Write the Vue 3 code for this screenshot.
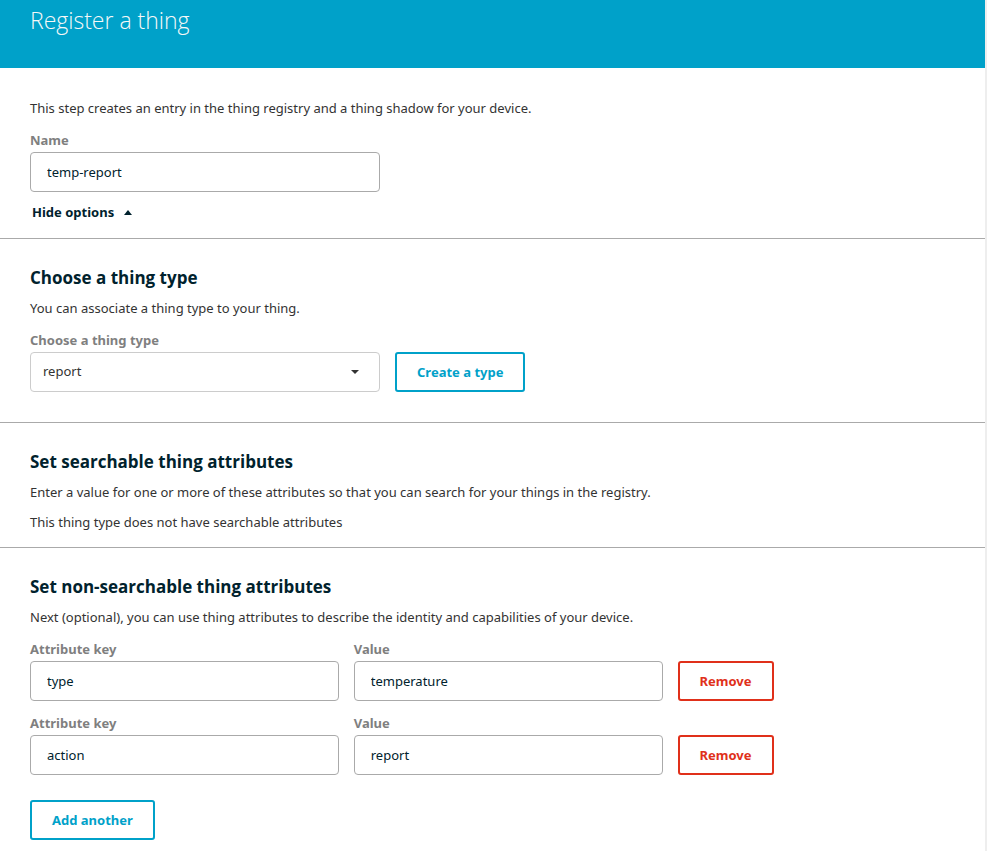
<script setup>
import { ref } from 'vue'

const name = ref('temp-report')
const thingType = ref('report')
const showOptions = ref(true)
const attributes = ref([
  { id: 1, key: 'type', value: 'temperature' },
  { id: 2, key: 'action', value: 'report' },
])
let nextId = 3

function addAttribute() {
  attributes.value.push({ id: nextId++, key: '', value: '' })
}

function removeAttribute(id) {
  attributes.value = attributes.value.filter((a) => a.id !== id)
}
</script>

<template>
  <main class="page">
    <header class="banner">
      <h1>Register a thing</h1>
    </header>

    <section class="section intro">
      <p>This step creates an entry in the thing registry and a thing shadow for your device.</p>
      <div class="field">
        <label for="thing-name">Name</label>
        <input id="thing-name" v-model="name" class="control fixed" type="text" />
      </div>
      <button class="toggle" type="button" @click="showOptions = !showOptions">
        {{ showOptions ? 'Hide options' : 'Show options' }}
        <svg :class="{ flipped: !showOptions }" width="8" height="5" viewBox="0 0 8 5" aria-hidden="true">
          <path d="M0 5 L4 0 L8 5 Z" fill="currentColor" />
        </svg>
      </button>
    </section>

    <template v-if="showOptions">
      <section class="section type">
        <h2>Choose a thing type</h2>
        <p>You can associate a thing type to your thing.</p>
        <div class="type-row">
          <div class="field">
            <label for="thing-type">Choose a thing type</label>
            <div class="select-wrap">
              <select id="thing-type" v-model="thingType" class="control fixed">
                <option value="report">report</option>
              </select>
              <svg class="caret" width="8" height="4" viewBox="0 0 8 4" aria-hidden="true">
                <path d="M0 0 H8 L4 4 Z" fill="#333" />
              </svg>
            </div>
          </div>
          <button class="btn primary" type="button">Create a type</button>
        </div>
      </section>

      <section class="section searchable">
        <h2>Set searchable thing attributes</h2>
        <p>Enter a value for one or more of these attributes so that you can search for your things in the registry.</p>
        <p>This thing type does not have searchable attributes</p>
      </section>

      <section class="section last">
        <h2>Set non-searchable thing attributes</h2>
        <p>Next (optional), you can use thing attributes to describe the identity and capabilities of your device.</p>
        <div class="attributes">
          <div v-for="attr in attributes" :key="attr.id" class="attribute">
            <div class="field cell">
              <label :for="`key-${attr.id}`">Attribute key</label>
              <input :id="`key-${attr.id}`" v-model="attr.key" class="control" type="text" />
            </div>
            <div class="field cell">
              <label :for="`value-${attr.id}`">Value</label>
              <input :id="`value-${attr.id}`" v-model="attr.value" class="control" type="text" />
            </div>
            <button class="btn danger" type="button" @click="removeAttribute(attr.id)">Remove</button>
          </div>
        </div>
        <button class="btn primary" type="button" @click="addAttribute">Add another</button>
      </section>
    </template>
  </main>
</template>

<style>
body {
  background: #fff;
}
</style>

<style scoped>
.page {
  box-sizing: border-box;
  min-height: 100vh;
  border-right: 2px solid #eee;
  color: #333;
  font-family: "Noto Sans", "Open Sans", sans-serif;
  font-size: 13px;
  font-weight: 400;
  line-height: 20px;
}

.banner {
  padding: 4px 30px 32px;
  background: #00a1c9;
}

h1 {
  margin: 0;
  color: #f6f8f8;
  font-family: "Open Sans", "Noto Sans", sans-serif;
  font-size: 23px;
  font-weight: 350;
  line-height: 32px;
}

.section {
  padding: 27px 30px 30px;
  border-bottom: 1px solid #aaa;
}

.section.intro {
  padding-top: 30px;
  padding-bottom: 16px;
}

.section.searchable {
  padding-bottom: 15px;
}

.section.last {
  padding-bottom: 10px;
  border-bottom: 0;
}

h2 {
  margin: 0 0 8px;
  color: #00222d;
  font-family: "Open Sans", "Noto Sans", sans-serif;
  font-size: 17px;
  font-weight: 700;
  line-height: 24px;
}

p {
  margin: 0 0 12px;
}

.searchable p {
  margin: 0;
}

.searchable p + p {
  margin-top: 10px;
}

.field {
  display: flex;
  flex-direction: column;
  align-items: flex-start;
  gap: 2px;
}

label {
  color: #7f7f7f;
  font-weight: 700;
}

.control {
  box-sizing: border-box;
  width: 100%;
  height: 40px;
  margin: 0;
  padding: 0 16px;
  border: 1px solid #aaa;
  border-radius: 4px;
  background: #fff;
  color: #00222d;
  font: inherit;
}

.control.fixed {
  width: 350px;
  max-width: 100%;
}

select.control {
  appearance: none;
  padding: 0 32px 2px 12px;
  border-color: #ccc;
  color: #333;
}

.select-wrap {
  position: relative;
}

.caret {
  position: absolute;
  top: 18px;
  right: 21px;
  pointer-events: none;
}

.toggle {
  display: flex;
  align-items: center;
  gap: 10px;
  margin-top: 10px;
  padding: 0 2px;
  border: 0;
  background: none;
  color: #00222d;
  font: inherit;
  font-weight: 700;
  cursor: pointer;
}

.flipped {
  transform: rotate(180deg);
}

.type-row {
  display: flex;
  flex-wrap: wrap;
  align-items: flex-end;
  gap: 15px;
}

.btn {
  box-sizing: border-box;
  height: 40px;
  padding: 0 20px;
  border: 2px solid currentColor;
  border-radius: 3px;
  background: #fff;
  font: inherit;
  font-weight: 700;
  cursor: pointer;
}

.primary {
  color: #00a1c9;
}

.danger {
  color: #e0301a;
}

.attributes {
  display: flex;
  flex-direction: column;
  gap: 12px;
  margin-bottom: 25px;
}

.attribute {
  display: flex;
  align-items: flex-end;
}

.cell {
  box-sizing: border-box;
  width: 35%;
  padding-right: 15px;
}
</style>
